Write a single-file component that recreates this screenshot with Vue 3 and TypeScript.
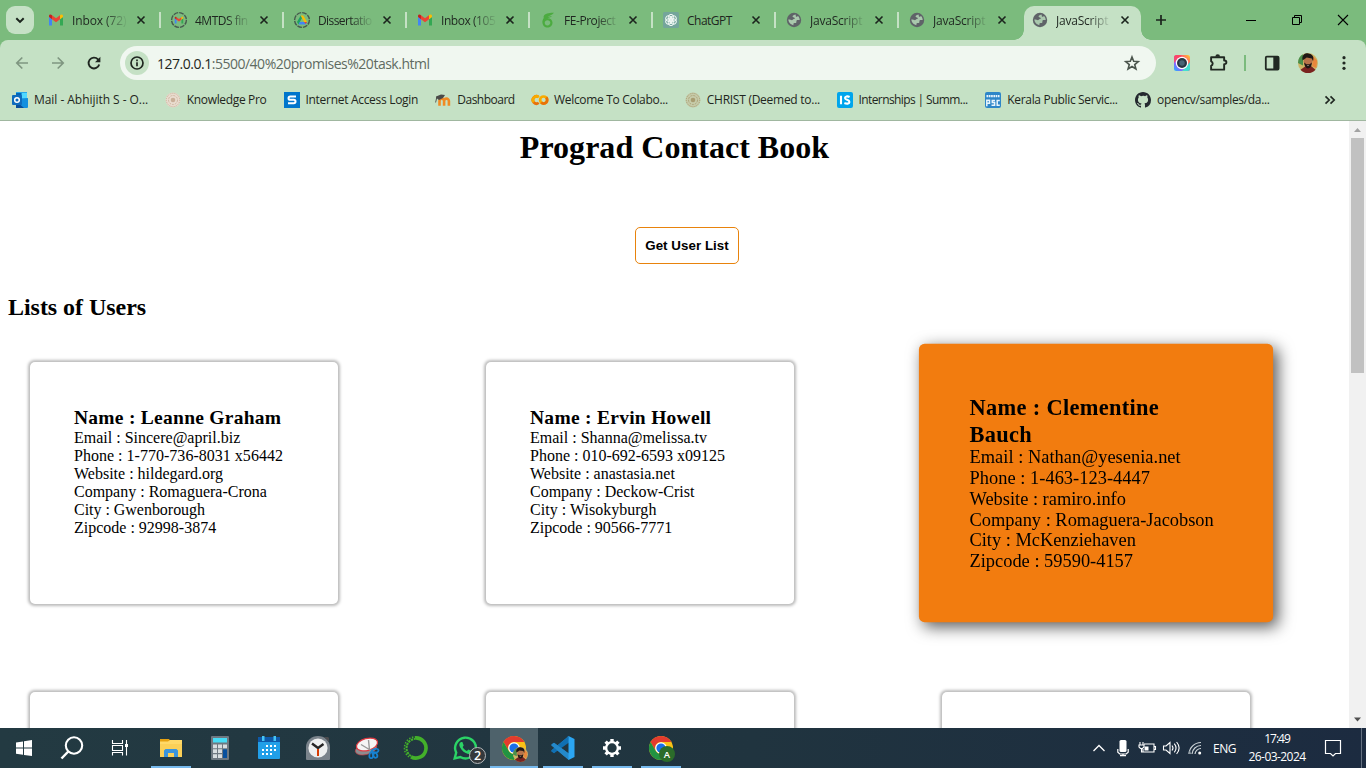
<script setup lang="ts">
import type { Directive } from 'vue'

interface Tab { icon: string; title: string; width: number; active?: boolean }
interface Bookmark { icon: string; label: string; width: number }
interface Line { text: string; width: number }
interface User { name: Line[]; details: Line[]; hovered?: boolean }
interface Task { icon: string; running?: boolean; focused?: boolean }

// Adjusts the letter spacing so the text takes exactly the given width.
const vFit: Directive<HTMLElement, number> = {
  mounted(el, binding) {
    const range = document.createRange()
    range.selectNodeContents(el)
    const scale = el.offsetWidth ? el.getBoundingClientRect().width / el.offsetWidth : 1
    const natural = range.getBoundingClientRect().width / (scale || 1)
    const count = (el.textContent ?? '').length
    el.style.letterSpacing = `${(binding.value - natural) / Math.max(count - 1, 1)}px`
  },
}

const gmail = '<path fill="#4285f4" d="M1 13.5h3V7.300L1 5z"/><path fill="#34a853" d="M12 13.500h3V5l-3 2.300z"/><path fill="#ea4335" d="M4 3.300l4 3 4-3v4L8 10.300 4 7.300z"/><path fill="#c5221f" d="M1 4c0-1.500 1.700-2 3-.7v4L1 5z"/><path fill="#fbbc04" d="M12 3.300c1.300-1.300 3-.8 3 .7v1l-3 2.300z"/>'
const ring = '<circle cx="8" cy="8" r="7.400" fill="none" stroke="#46594d" stroke-width="1.400" stroke-dasharray="4.800 1"/>'
const seal = (c: string, l: string) => `<circle cx="8" cy="8" r="7.500" fill="${l}"/><circle cx="8" cy="8" r="6.700" fill="none" stroke="${c}" stroke-width="1" stroke-dasharray="1 1"/><circle cx="8" cy="8" r="4.500" fill="none" stroke="${c}" stroke-width=".8" stroke-dasharray="2 1"/><circle cx="8" cy="8" r="2.300" fill="${c}"/>`
const chrome = '<circle cx="12" cy="12" r="12" fill="#fbc116"/><path fill="#e33b2e" d="M1.600 6A12 12 0 0 1 22.400 6H12a6 6 0 0 0-5.200 9z"/><path fill="#229342" d="M1.600 6A12 12 0 0 0 12 24l5.200-9A6 6 0 0 1 6.800 15z"/><circle cx="12" cy="12" r="5.800" fill="#fff"/><circle cx="12" cy="12" r="4.600" fill="#1a6fe8"/>'
const face = '<circle cx="12" cy="12" r="12" fill="#cdb565"/><path fill="#4a8f4a" d="M0 12A12 12 0 0 1 6 1.600V15z"/><path fill="#e9863c" d="M18 4l5 5-1 9-5-2z"/><path fill="#7a2320" d="M3 20l6-4h7l5 4a12 12 0 0 1-18 0z"/><ellipse cx="12" cy="10" rx="5.200" ry="7" fill="#b8734a"/><path fill="#201715" d="M5.500 9C4 2 9 0 12.500.5S20 3 18 10l-1.500-3.500-6-1-3 2zM7.500 11.500l2.500 2h4l2.500-2c0 5-2 7-4.500 7s-4.500-3-4.500-7z"/><path fill="#e9d7cc" d="M10.500 14.800h3l-1.500.9z"/>'

const icons16: Record<string, string> = {
  gmail,
  gmailRing: `<g transform="translate(3.100 3.200) scale(.61)">${gmail}</g>${ring}`,
  drive: `${ring}<path fill="#1ea362" d="M6.700 3.500L3 10l1.500 2.500L8 6z"/><path fill="#fbbc04" d="M6.700 3.500h2.600L13 10h-2.800z"/><path fill="#4285f4" d="M5.800 9.900H13l-1.500 2.600h-7z"/><path fill="#ea4335" d="M10.200 10H13l-1.200 2z"/>`,
  overleaf: '<path fill="#4cab40" d="M14 .8C10.500.8 6 1 4.200 3.300c-.7 1-.7 1.700-.4 2.700C2.700 7.300 2.300 8.900 2.400 10.500c.2 3 2.400 5 5.100 5s5-2.100 5-4.800-2-4.500-4.500-4.500c-.5 0-1 .1-1.400.3C8.500 5.800 10.800 5.700 12 4c-1.500.5-3 .8-4.500.8C9.500 4 12 3 14 .8zM7.500 8.200c1.600 0 2.800 1.100 2.800 2.500s-1.200 2.700-2.800 2.700-2.800-1.200-2.800-2.700 1.200-2.500 2.800-2.500z"/>',
  gpt: '<rect width="16" height="16" rx="1.500" fill="#74a59b"/><g fill="none" stroke="#f0f7f4" stroke-width="1"><ellipse cx="8" cy="5.700" rx="2.700" ry="3.400"/><ellipse cx="8" cy="5.700" rx="2.700" ry="3.400" transform="rotate(60 8 8)"/><ellipse cx="8" cy="5.700" rx="2.700" ry="3.400" transform="rotate(120 8 8)"/><ellipse cx="8" cy="5.700" rx="2.700" ry="3.400" transform="rotate(180 8 8)"/><ellipse cx="8" cy="5.700" rx="2.700" ry="3.400" transform="rotate(240 8 8)"/><ellipse cx="8" cy="5.700" rx="2.700" ry="3.400" transform="rotate(300 8 8)"/></g>',
  globe: '<circle cx="8" cy="8" r="7.200" fill="#5f6368"/><path fill="#a9c8ad" d="M9 2.600c-.8.8-2.300.7-2.500 1.800.2 1.200 2.300.6 2.400 1.900 0 1-1.700.8-2.200 1.500-.7.900-2-.2-4.400-.2.200 1.900 1 3.400 2.400 4.500l2.600 1.200c.5-.6-.3-1.400.5-2 1-.5 2 .1 2.500-.8.500-.8-.3-1.400.3-2.100.7-.7 1.700-.3 3.100-.3 0-1.600-.7-3.100-1.700-4-1 1.100-2 .7-2.300-.2.100-.7.500-.9-.7-1.300z"/>',
  outlook: '<rect x="4" y="0" width="11" height="12" fill="#28a8ea"/><path fill="#50d9ff" d="M9.500 1H15v5H9.500z"/><path fill="#0364b8" d="M4 1h5.500v5H4z"/><path fill="#1490df" d="M4 8l12-2v9a1 1 0 0 1-1 1H4z"/><path fill="#0a4f9c" d="M4 9l8 7H4z"/><rect x="0" y="3" width="10" height="10" rx="1" fill="#0f6cbd"/><circle cx="5" cy="8" r="2.300" fill="none" stroke="#fff" stroke-width="1.500"/>',
  seal: seal('#c9af98', '#e9dccf'),
  seal2: seal('#a79c70', '#c6cba9'),
  sophos: '<rect width="16" height="16" fill="#0076cc"/><path fill="none" stroke="#fff" stroke-width="2" d="M12 4.500H6.200a1.500 1.500 0 0 0 0 3.300h3.600a1.600 1.600 0 0 1 0 3.400H4"/>',
  moodle: '<path fill="none" stroke="#f08a24" stroke-width="2.600" d="M4.500 13.800V9a2.300 2.300 0 0 1 4.600 0v4.800M9.100 13.800V9a2.400 2.400 0 0 1 4.800 0v4.800"/><path fill="#4a4a48" d="M1 4.500L6 2.500l4 .5-2 3-4 2-2-1.500-1 4-.8-.1.900-4.500z"/>',
  colab: '<g fill="none" stroke-width="2.700"><path stroke="#e8710a" d="M6.700 10.800A3.600 3.600 0 1 1 6.500 5"/><circle cx="11.600" cy="8" r="3.500" stroke="#f9ab00"/><path stroke="#e8710a" d="M9.200 10.500a3.500 3.500 0 0 0 5-5"/><path stroke="#f9ab00" d="M1.700 10.200A3.600 3.600 0 0 1 6.800 5.200"/></g>',
  is: '<rect width="16" height="16" rx="2" fill="#00a5ec"/><path stroke="#fff" stroke-width="2.100" fill="none" d="M4 3.800v8.400M12.600 5C10.500 3.900 8 4.300 8 6c0 2.200 4.400 1.500 4.400 3.900 0 2-2.700 2.200-5 1.100"/>',
  psc: '<rect width="16" height="16" rx="2" fill="#2e86c8"/><g fill="none" stroke="#e8f4fc" stroke-width="1.500"><path d="M1.500 4.200h13" stroke-dasharray="1.700 .6" stroke-width="2.200"/><path d="M1.800 14.300V8.300h2.700v3H2M10 8.400H7.300v2.200h2.300v2.700H6.500M14.800 8.400h-2.600v4.900h2.600"/></g>',
  github: '<path fill="#24292f" d="M8 0C3.580 0 0 3.580 0 8c0 3.540 2.290 6.530 5.470 7.590.4.070.55-.17.55-.38 0-.19-.01-.82-.01-1.490-2.010.37-2.530-.49-2.690-.94-.09-.23-.48-.94-.82-1.130-.28-.15-.68-.52-.01-.53.63-.01 1.080.58 1.230.82.72 1.210 1.870.87 2.330.66.07-.52.28-.87.51-1.070-1.780-.2-3.640-.89-3.640-3.950 0-.87.31-1.590.82-2.150-.08-.2-.36-1.020.08-2.120 0 0 .67-.21 2.200.82A7.600 7.600 0 0 1 8 3.860c.68 0 1.360.09 2 .27 1.530-1.040 2.200-.82 2.200-.82.44 1.100.16 1.920.08 2.120.51.56.82 1.270.82 2.150 0 3.070-1.870 3.750-3.650 3.950.29.25.54.73.54 1.480 0 1.070-.01 1.930-.01 2.200 0 .21.15.46.55.38A8.010 8.010 0 0 0 16 8c0-4.420-3.580-8-8-8z"/>',
  back: '<path fill="none" stroke="#7f9681" stroke-width="1.700" d="M14 8H3M8.300 2.500L2.800 8l5.500 5.500"/>',
  forward: '<path fill="none" stroke="#7f9681" stroke-width="1.700" d="M2 8h11M7.700 2.500L13.200 8l-5.500 5.500"/>',
  reload: '<path fill="none" stroke="#1f2620" stroke-width="1.900" d="M13.200 9.400A5.400 5.400 0 1 1 12 4.400l1.200 1.300"/><path fill="#1f2620" d="M14.400 1.800v5.400H9z"/>',
  info: '<circle cx="8" cy="8" r="6" fill="none" stroke="#1f2620" stroke-width="1.700"/><path stroke="#1f2620" stroke-width="1.700" d="M8 7.200v4M8 4.600v1.600"/>',
  star: '<path fill="none" stroke="#4b554d" stroke-width="1.400" stroke-linejoin="miter" d="M8 2.600l1.500 3.800 4.100.3-3.200 2.700 1.100 3.900L8 11.100l-3.500 2.200 1.100-3.900-3.200-2.700 4.100-.3z"/>',
  lens: '<defs><linearGradient id="ls" x1="0" y1="1" x2="1" y2="0"><stop offset="0" stop-color="#19b8ff"/><stop offset=".35" stop-color="#a94dff"/><stop offset=".6" stop-color="#ff357a"/><stop offset="1" stop-color="#ffd52a"/></linearGradient></defs><rect width="16" height="16" rx="2.500" fill="url(#ls)"/><path fill="#ff4b5c" d="M0 8V2.500A2.500 2.500 0 0 1 2.500 0H8z" opacity=".8"/><path fill="#43dfcf" d="M8 16l8-9v6.500a2.500 2.500 0 0 1-2.500 2.500z"/><circle cx="8" cy="8" r="6.200" fill="#fff"/><circle cx="8" cy="8" r="5" fill="#273642"/><circle cx="8" cy="8" r="2.700" fill="#486476"/>',
  puzzle: '<path fill="none" stroke="#202822" stroke-width="1.800" stroke-linejoin="round" d="M2 3h12.300v3.200h.4a1.600 1.600 0 0 1 0 3.400h-.4v5.200H2v-3.600a2.300 2.300 0 0 0 0-4.300z"/><path fill="#202822" d="M6 2.500a2.200 2.200 0 0 1 4.400 0z"/>',
  panel: '<rect x="1.800" y="1.700" width="12.800" height="12.800" rx="1" fill="none" stroke="#202822" stroke-width="1.800"/><path fill="#202822" d="M9.300 2h5.300v12H9.300z"/>',
  dots: '<g fill="#202822"><circle cx="8" cy="2.700" r="1.600"/><circle cx="8" cy="8" r="1.600"/><circle cx="8" cy="13.300" r="1.600"/></g>',
  close: '<path fill="none" stroke="#1b241d" stroke-width="1.600" d="M4.500 4.500l7 7M11.500 4.500l-7 7"/>',
  plus: '<path fill="none" stroke="#1b241d" stroke-width="1.700" d="M8 3v10M3 8h10"/>',
  down: '<path fill="none" stroke="#1b241d" stroke-width="2" d="M4.300 6.200L8 9.900l3.700-3.700"/>',
  min: '<path stroke="#000" d="M3 8.500h10"/>',
  restore: '<path fill="none" stroke="#000" d="M3.500 5.500h7v7h-7zM5.500 5.500v-2h7v7h-2"/>',
  quit: '<path fill="none" stroke="#000" stroke-width="1.100" d="M3 3l10 10M13 3L3 13"/>',
  more: '<path fill="none" stroke="#202822" stroke-width="1.700" d="M3.500 4.300L7.200 8l-3.700 3.700M8.500 4.300L12.200 8l-3.700 3.700"/>',
}

const icons24: Record<string, string> = {
  face,
  windows: '<path fill="#fff" d="M4 6.400l7-1v6.200H4zM12 5.200l8-1.200v7.600h-8zM4 12.600h7v6.200l-7-1zM12 12.600h8V20l-8-1.100z"/>',
  search: '<circle cx="14" cy="9.500" r="8.200" fill="none" stroke="#fff" stroke-width="2.100"/><path stroke="#fff" stroke-width="2.500" d="M8.300 15.500L1.500 22.500"/>',
  taskview: '<g fill="none" stroke="#fff" stroke-width="1.100"><path d="M4.500 4v3.500h10V4M4.500 19.500V16.500h10v3M4.500 9.500h10v5h-10zM18.500 4v15.500"/></g><path fill="#fff" d="M17 8h3v3h-3z"/>',
  explorer: '<path fill="#e6a212" d="M1 3h9l2 3H1z"/><path fill="#ffd968" d="M1 5.500h8l2-1.500h12v17H1z"/><path fill="#f7c748" d="M1 8h22v13H1z" opacity=".5"/><path fill="#3b94dc" d="M5 21v-6.500l1.500-1.500h11l1.500 1.500V21h-4v-4H9v4z"/>',
  calculator: '<rect x="3" y="0" width="18" height="24" rx="1" fill="#6e7881"/><rect x="5" y="2" width="14" height="4.500" fill="#47dcf5"/><g fill="#d8dde0"><path d="M5 8.500h4v3.700H5zM10 8.500h4v3.700h-4zM15 8.500h4v3.700h-4zM5 13.300h4V17H5zM10 13.300h4V17h-4zM5 18.200h4V22H5zM10 18.200h4V22h-4z"/></g><path fill="#08509e" d="M15 13.300h4V22h-4z"/>',
  calendar: '<rect x="1" y="1" width="22" height="22" rx="1" fill="#219fe8"/><path fill="#0e59a9" d="M1 1h22v5H1z"/><path fill="#45c5f5" d="M5 0h2.500v5H5zM16.500 0H19v5h-2.500z"/><g fill="#fff"><path d="M9 9h2v2H9zM13 9h2v2h-2zM17 9h2v2h-2zM5 13h2v2H5zM9 13h2v2H9zM13 13h2v2h-2zM17 13h2v2h-2zM5 17h2v2H5zM9 17h2v2H9zM13 17h2v2h-2z"/></g>',
  clock: '<path fill="#7a838b" d="M0 11A12 11 0 0 1 24 11v12a1 1 0 0 1-1 1H1a1 1 0 0 1-1-1z"/><path fill="#4b4b4e" d="M18 1h4l1 1v4z"/><circle cx="12" cy="12" r="9.600" fill="#eef0f0"/><path stroke="#252525" stroke-width="2.400" fill="none" d="M6 7.500l6 4.500 5.500-4"/><path stroke="#d83b01" stroke-width="2" d="M12 13v7"/>',
  snip: '<ellipse cx="11" cy="13" rx="11" ry="5.500" fill="#8c8d90" stroke="#cf3a42" stroke-width=".6" transform="rotate(-15 11 13)"/><ellipse cx="12" cy="8.500" rx="10.800" ry="6" fill="#f5f5f5" stroke="#e03a42" stroke-width="1.200" transform="rotate(-15 12 8.500)"/><path stroke="#999" stroke-width="1.400" d="M6 8.500l10 6M13.500 4l1 10"/><g fill="none" stroke="#1682d1" stroke-width="1.700"><ellipse cx="20" cy="15" rx="3.600" ry="2" transform="rotate(-15 20 15)"/><ellipse cx="16.500" cy="19" rx="2" ry="3.300" transform="rotate(15 16.500 19)"/><ellipse cx="20" cy="19" rx="2" ry="3" transform="rotate(-30 20 19)"/></g>',
  anaconda: '<path fill="none" stroke="#43b02a" stroke-width="3.600" d="M11 1.900a10.100 10.100 0 1 1-4 18.900"/><path fill="none" stroke="#43b02a" stroke-width="2" stroke-dasharray="2.300 .8" d="M7 20A9.300 9.300 0 0 1 11 2.800"/><path fill="none" stroke="#43b02a" stroke-width="1.500" stroke-dasharray="1.500 1.500" d="M5 21A11.200 11.200 0 0 1 11 .8"/>',
  whatsapp: '<path fill="none" stroke="#2bd366" stroke-width="2.400" d="M1.700 22.300l1.500-5.700A10.400 10.400 0 1 1 7.300 21z"/><path fill="#2bd366" d="M8.200 6c-2 .8-2.500 3-1.200 5.200 2 3.600 4.600 6 8.200 6.700 1.600.1 3.200-1.200 3.200-3l-3-1.500-1.500 1.600c-2-.7-3.500-2.300-4.200-3.900l1-1.500L9.400 6z"/><circle cx="24.500" cy="19.500" r="8" fill="#35393c" stroke="#b5b9bb" stroke-width="1"/><text x="24.500" y="24" fill="#fff" font-family="Open Sans, sans-serif" font-size="12.500" font-weight="600" text-anchor="middle">2</text>',
  chromeFace: `${chrome}<g transform="translate(11 11) scale(.62)">${face}</g>`,
  vscode: '<path fill="#1f8ad2" d="M18 0l-6.500 10L3 16.800l-2.500-1.500v-1L17.500.3z"/><path fill="#2489ca" d="M.5 8.500L3 6.800 18 18v5.800h-.5L.5 9.500z"/><path fill="#1070b3" d="M.5 14.500L17.500.2 18 6.500 3 17.300.5 15.500z"/><path fill="#2489ca" d="M.5 9.500v-1L3 6.700 18 17.500l-.5 6.300z"/><path fill="#2ba6f3" d="M17.500 0L23.500 3v18l-6 3z"/>',
  settings: '<path stroke="#fff" stroke-width="3.400" d="M12 3v18M3 12h18M5.600 5.600l12.800 12.800M18.400 5.600L5.600 18.400"/><circle cx="12" cy="12" r="7" fill="#fff"/><circle cx="12" cy="12" r="4.700" fill="#21363f"/>',
  chromeA: `${chrome}<circle cx="18" cy="18" r="8" fill="#2b6c2a"/><text x="18" y="21.700" fill="#fff" font-family="Open Sans, sans-serif" font-size="9.500" font-weight="600" text-anchor="middle">A</text>`,
  caret: '<path fill="none" stroke="#fff" stroke-width="1.300" d="M6.500 15L12 9.500l5.500 5.500"/>',
  mic: '<rect x="8.500" y="4" width="7" height="12" rx="1.500" fill="#fff"/><path fill="none" stroke="#fff" stroke-width="1.200" d="M6.800 13v3.200l2 1.800h6.400l2-1.800V13M12 18v2M9 19.600h6"/>',
  battery: '<path fill="none" stroke="#fff" stroke-width="1.100" d="M9 8h10v8H8v-3M19 10.500h1.500v3H19M5 6v3M8 6v3M4 9h5v2L7.500 12.500h-2L4 11zM6.500 12.500V16H8"/><path fill="#fff" d="M9.500 10.500h4v4h-4z"/>',
  speaker: '<path fill="none" stroke="#fff" stroke-width="1.100" d="M4.500 10v4H7l4 3.500V6.500L7 10zM13 9.500q2 2.500 0 5M15.300 7.600q3.500 4.400 0 8.800M17.600 6q5 6 0 12"/>',
  wifi: '<g fill="none" stroke="#cfd6da" stroke-width="1.200"><path d="M6 18A12 12 0 0 1 18 6.500M9 18a9 9 0 0 1 9-8.500M12 18a6 6 0 0 1 6-5.500"/><path stroke="#8e9ba3" d="M7.500 18l-1-3"/></g><circle cx="16.700" cy="17" r="1.500" fill="#fff"/>',
  notice: '<path fill="none" stroke="#fff" stroke-width="1.200" d="M4.500 4.500h15v13h-5L12 20l-2.500-2.500h-5z"/>',
}

const tabs: Tab[] = [
  { icon: 'gmail', title: 'Inbox (72)', width: 54 },
  { icon: 'gmailRing', title: '4MTDS fin', width: 53 },
  { icon: 'drive', title: 'Dissertatio', width: 54 },
  { icon: 'gmail', title: 'Inbox (105', width: 55 },
  { icon: 'overleaf', title: 'FE-Project', width: 52 },
  { icon: 'gpt', title: 'ChatGPT', width: 45 },
  { icon: 'globe', title: 'JavaScript', width: 52 },
  { icon: 'globe', title: 'JavaScript', width: 52 },
  { icon: 'globe', title: 'JavaScript', width: 52, active: true },
]

const bookmarks: Bookmark[] = [
  { icon: 'outlook', label: 'Mail - Abhijith S - O...', width: 114 },
  { icon: 'seal', label: 'Knowledge Pro', width: 80 },
  { icon: 'sophos', label: 'Internet Access Login', width: 113 },
  { icon: 'moodle', label: 'Dashboard', width: 58 },
  { icon: 'colab', label: 'Welcome To Colabo...', width: 114 },
  { icon: 'seal2', label: 'CHRIST (Deemed to...', width: 113 },
  { icon: 'is', label: 'Internships | Summ...', width: 110 },
  { icon: 'psc', label: 'Kerala Public Servic...', width: 111 },
  { icon: 'github', label: 'opencv/samples/da...', width: 113 },
]

const users: User[] = [
  {
    name: [{ text: 'Name : Leanne Graham', width: 207 }],
    details: [
      { text: 'Email : Sincere@april.biz', width: 166 },
      { text: 'Phone : 1-770-736-8031 x56442', width: 208.5 },
      { text: 'Website : hildegard.org', width: 149 },
      { text: 'Company : Romaguera-Crona', width: 193 },
      { text: 'City : Gwenborough', width: 131.5 },
      { text: 'Zipcode : 92998-3874', width: 142 },
    ],
  },
  {
    name: [{ text: 'Name : Ervin Howell', width: 181 }],
    details: [
      { text: 'Email : Shanna@melissa.tv', width: 177 },
      { text: 'Phone : 010-692-6593 x09125', width: 195 },
      { text: 'Website : anastasia.net', width: 145 },
      { text: 'Company : Deckow-Crist', width: 164 },
      { text: 'City : Wisokyburgh', width: 126.5 },
      { text: 'Zipcode : 90566-7771', width: 142 },
    ],
  },
  {
    hovered: true,
    name: [{ text: 'Name : Clementine', width: 164.3 }, { text: 'Bauch', width: 54 }],
    details: [
      { text: 'Email : Nathan@yesenia.net', width: 183.5 },
      { text: 'Phone : 1-463-123-4447', width: 156.5 },
      { text: 'Website : ramiro.info', width: 136 },
      { text: 'Company : Romaguera-Jacobson', width: 212 },
      { text: 'City : McKenziehaven', width: 144.8 },
      { text: 'Zipcode : 59590-4157', width: 142 },
    ],
  },
  { name: [], details: [] },
  { name: [], details: [] },
  { name: [], details: [] },
]

const tasks: Task[] = [
  { icon: 'explorer', running: true },
  { icon: 'calculator' },
  { icon: 'calendar' },
  { icon: 'clock' },
  { icon: 'snip' },
  { icon: 'anaconda' },
  { icon: 'whatsapp' },
  { icon: 'chromeFace', running: true, focused: true },
  { icon: 'vscode', running: true },
  { icon: 'settings', running: true },
  { icon: 'chromeA', running: true },
]
</script>

<template>
  <div class="screen">
    <header class="strip">
      <button class="tab-search"><svg class="i16" viewBox="0 0 16 16" v-html="icons16.down" /></button>
      <div class="tabs">
        <div v-for="(tab, i) in tabs" :key="i" class="tab" :class="{ active: tab.active, bare: i === 7 }">
          <svg class="i16" viewBox="0 0 16 16" v-html="icons16[tab.icon]" />
          <div class="tab-title" :class="{ fade: tab.title !== 'ChatGPT' }"><span v-fit="tab.width">{{ tab.title }}</span></div>
          <svg class="i16 tab-close" viewBox="0 0 16 16" v-html="icons16.close" />
        </div>
      </div>
      <svg class="i16 new-tab" viewBox="0 0 16 16" v-html="icons16.plus" />
      <div class="controls">
        <span v-for="name in ['min', 'restore', 'quit']" :key="name"><svg class="i16" viewBox="0 0 16 16" v-html="icons16[name]" /></span>
      </div>
    </header>

    <section class="chrome">
      <div class="toolbar">
        <span v-for="name in ['back', 'forward', 'reload']" :key="name" class="slot"><svg class="i16" viewBox="0 0 16 16" v-html="icons16[name]" /></span>
        <div class="omnibox">
          <span class="site"><svg viewBox="0 0 16 16" v-html="icons16.info" /></span>
          <span v-fit="273" class="url"><b>127.0.0.1</b>:5500/40%20promises%20task.html</span>
          <svg class="i18 star" viewBox="0 0 16 16" v-html="icons16.star" />
        </div>
        <span class="slot"><svg class="i16" viewBox="0 0 16 16" v-html="icons16.lens" /></span>
        <span class="slot"><svg class="i18" viewBox="0 0 17 17" v-html="icons16.puzzle" /></span>
        <span class="slot half"><i class="divider" /></span>
        <span class="slot"><svg class="i16" viewBox="0 0 16 16" v-html="icons16.panel" /></span>
        <span class="slot"><svg class="avatar" viewBox="0 0 24 24" v-html="icons24.face" /></span>
        <span class="slot"><svg class="i16" viewBox="0 0 16 16" v-html="icons16.dots" /></span>
      </div>
      <nav class="bookmarks">
        <div v-for="mark in bookmarks" :key="mark.label" class="bookmark">
          <svg class="i16" viewBox="0 0 16 16" v-html="icons16[mark.icon]" />
          <span class="label" :style="{ width: mark.width + 'px' }"><span v-fit="mark.width">{{ mark.label }}</span></span>
        </div>
        <svg class="i16 more" viewBox="0 0 16 16" v-html="icons16.more" />
      </nav>
    </section>

    <div class="viewport">
      <main class="page">
        <h1><span v-fit="309.500">Prograd Contact Book</span></h1>
        <button class="get"><span v-fit="83.500">Get User List</span></button>
        <h2><span v-fit="138.500">Lists of Users</span></h2>
        <div class="grid">
          <article v-for="(user, i) in users" :key="i" class="card" :class="{ hovered: user.hovered }">
            <h3 v-if="user.name.length"><span v-for="part in user.name" :key="part.text" class="row"><span v-fit="part.width">{{ part.text }}</span></span></h3>
            <p v-for="line in user.details" :key="line.text"><span v-fit="line.width">{{ line.text }}</span></p>
          </article>
        </div>
      </main>
      <aside class="scrollbar">
        <svg viewBox="0 0 17 17"><path d="M5 11l3.500-4 3.500 4z" fill="#a3a3a3" /></svg>
        <div class="thumb" />
        <svg viewBox="0 0 17 17"><path d="M5 6.500l3.500 4 3.500-4z" fill="#505050" /></svg>
      </aside>
    </div>

    <footer class="taskbar">
      <span v-for="name in ['windows', 'search', 'taskview']" :key="name" class="sys"><svg class="i24" viewBox="0 0 24 24" v-html="icons24[name]" /></span>
      <div class="apps">
        <span v-for="task in tasks" :key="task.icon" class="app" :class="{ running: task.running, focused: task.focused }">
          <svg class="i24" viewBox="0 0 24 24" v-html="icons24[task.icon]" />
        </span>
      </div>
      <div class="tray">
        <svg v-for="name in ['caret', 'mic', 'battery', 'speaker', 'wifi']" :key="name" class="i24" viewBox="0 0 24 24" v-html="icons24[name]" />
        <span class="lang"><span v-fit="23">ENG</span></span>
        <div class="time"><div><span v-fit="27">17:49</span></div><div><span v-fit="58">26-03-2024</span></div></div>
        <svg class="i24" viewBox="0 0 24 24" v-html="icons24.notice" />
        <i class="peek" />
      </div>
    </footer>
  </div>
</template>

<style>
body { margin: 0; overflow: hidden; }
</style>

<style scoped>
* { box-sizing: border-box; }
.screen { width: 1366px; height: 768px; overflow: hidden; display: flex; flex-direction: column; background: #7bbb7d; font-family: "Open Sans", "Noto Sans", sans-serif; font-size: 12px; color: #1f2620; }
svg { display: block; flex: none; overflow: visible; }
.i16 { width: 16px; height: 16px; }
.i18 { width: 18px; height: 18px; }
.i24 { width: 24px; height: 24px; }
button { font: inherit; }

.strip { height: 40px; flex: none; display: flex; align-items: center; padding-left: 6px; }
.tab-search { width: 28px; height: 28px; border: 0; border-radius: 9px; background: #c5e1c5; padding: 0; display: grid; place-items: center; }
.tabs { display: flex; margin-left: 4px; align-self: stretch; }
.tab { width: 123px; display: flex; align-items: center; padding-left: 10px; position: relative; }
.tab::after { content: ""; width: 2px; height: 16px; background: #c5e1c5; margin-left: auto; }
.tab.bare::after { visibility: hidden; }
.tab-title { width: 56px; margin-left: 8px; padding-top: 1px; white-space: nowrap; line-height: 20px; }
.fade { -webkit-mask-image: linear-gradient(90deg, #000 32px, transparent 56px); mask-image: linear-gradient(90deg, #000 32px, transparent 56px); }
.tab-close { margin-left: 5px; }
.tab.active { width: 117px; margin: 6px 0 0 2px; padding: 0 0 6px 8px; background: #c5e1c5; border-radius: 10px 10px 0 0; }
.tab.active::after, .tab.active::before { content: ""; position: absolute; bottom: 0; width: 10px; height: 10px; margin: 0; }
.tab.active::before { left: -10px; background: radial-gradient(circle at 0 0, transparent 9.500px, #c5e1c5 10px); }
.tab.active::after { right: -10px; background: radial-gradient(circle at 100% 0, transparent 9.500px, #c5e1c5 10px); }
.new-tab { margin-left: 12px; }
.controls { margin-left: auto; display: flex; }
.controls span { width: 46px; display: grid; place-items: center; }

.chrome { height: 81px; flex: none; background: #c5e1c5; border-radius: 8px 8px 0 0; border-bottom: 1px solid #a0b7a0; }
.toolbar { display: flex; align-items: center; height: 46px; padding-left: 4px; }
.slot { width: 36px; display: grid; place-items: center; }
.half { width: 18px; }
.divider { width: 2px; height: 16px; background: #7bbb7d; }
.omnibox { width: 1036px; height: 34px; margin: 0 8px; border-radius: 17px; background: #f0f7f0; display: flex; align-items: center; padding: 0 15px 0 5px; }
.site { width: 24px; height: 24px; border-radius: 50%; background: #c5e1c5; display: grid; place-items: center; }
.site svg { width: 16px; height: 16px; }
.url { font-size: 14px; margin-left: 8px; white-space: nowrap; color: #5f6b62; }
.url b { font-weight: 400; color: #1f2620; }
.star { margin-left: auto; }
.avatar { width: 20px; height: 20px; }
.bookmarks { display: flex; align-items: center; height: 28px; padding-left: 12px; gap: 16.750px; }
.bookmark { display: flex; align-items: center; gap: 6px; }
.label { white-space: nowrap; line-height: 18px; }
.more { margin: 0 28px 0 auto; }

.viewport { flex: 1; min-height: 0; display: flex; background: #fff; }
.page { width: 1349px; overflow: hidden; font-family: "Liberation Serif", "Times New Roman", serif; color: #000; padding: 0 8px; white-space: nowrap; }
h1 { margin: 8px 0 0; font-size: 32px; line-height: 37px; text-align: center; }
.get { display: block; width: 104px; height: 37px; margin: 61px 0 0 627px; padding: 0; background: #fff; border: 1px solid #e8830c; border-radius: 5px; font: bold 13.333px "Liberation Sans", Arial, sans-serif; color: #000; }
h2 { margin: 29px 0 0; font-size: 24px; line-height: 28px; }
.grid { display: grid; grid-template-columns: repeat(3, 308px); column-gap: 148px; row-gap: 88px; padding: 41px 0 0 22px; }
.card { height: 242px; padding: 44px 44px 0; border-radius: 5px; background: #fff; box-shadow: 0 0 3px 1.500px rgba(0, 0, 0, .27); }
.hovered { transform: scale(1.15); background: #f27c0f; box-shadow: 4px 4px 14px rgba(0, 0, 0, .65); }
h3 { margin: 0; font-size: 19.500px; line-height: 23px; }
.row { display: block; }
p { margin: 0; font-size: 16px; line-height: 18px; }
.scrollbar { width: 17px; background: #f1f1f1; display: flex; flex-direction: column; }
.scrollbar svg { width: 17px; height: 17px; }
.scrollbar svg:last-child { margin-top: auto; }
.thumb { width: 13px; height: 235px; margin-left: 2px; background: #c1c1c1; }

.taskbar { height: 40px; flex: none; display: flex; background: linear-gradient(90deg, #233a42, #20343f 55%, #1c2b40); color: #fff; }
.sys { width: 48px; display: grid; place-items: center; }
.apps { display: flex; margin-left: 2.500px; }
.app { width: 49px; display: flex; flex-direction: column; align-items: center; padding-top: 8px; }
.app.running::after { content: ""; width: 40px; height: 2px; background: #76b9ed; margin-top: auto; }
.app.focused { background: #4e626b; width: 48px; margin: 0 .500px; }
.app.focused::after { width: 48px; }
.tray { margin-left: auto; display: flex; align-items: center; height: 40px; }
.lang { width: 24px; margin-left: 6px; }
.time { width: 80px; text-align: center; line-height: 18px; }
.tray .time + .i24 { margin-left: 4px; }
.peek { width: 1px; height: 40px; background: #647080; margin: 0 4px 0 16px; }
</style>
